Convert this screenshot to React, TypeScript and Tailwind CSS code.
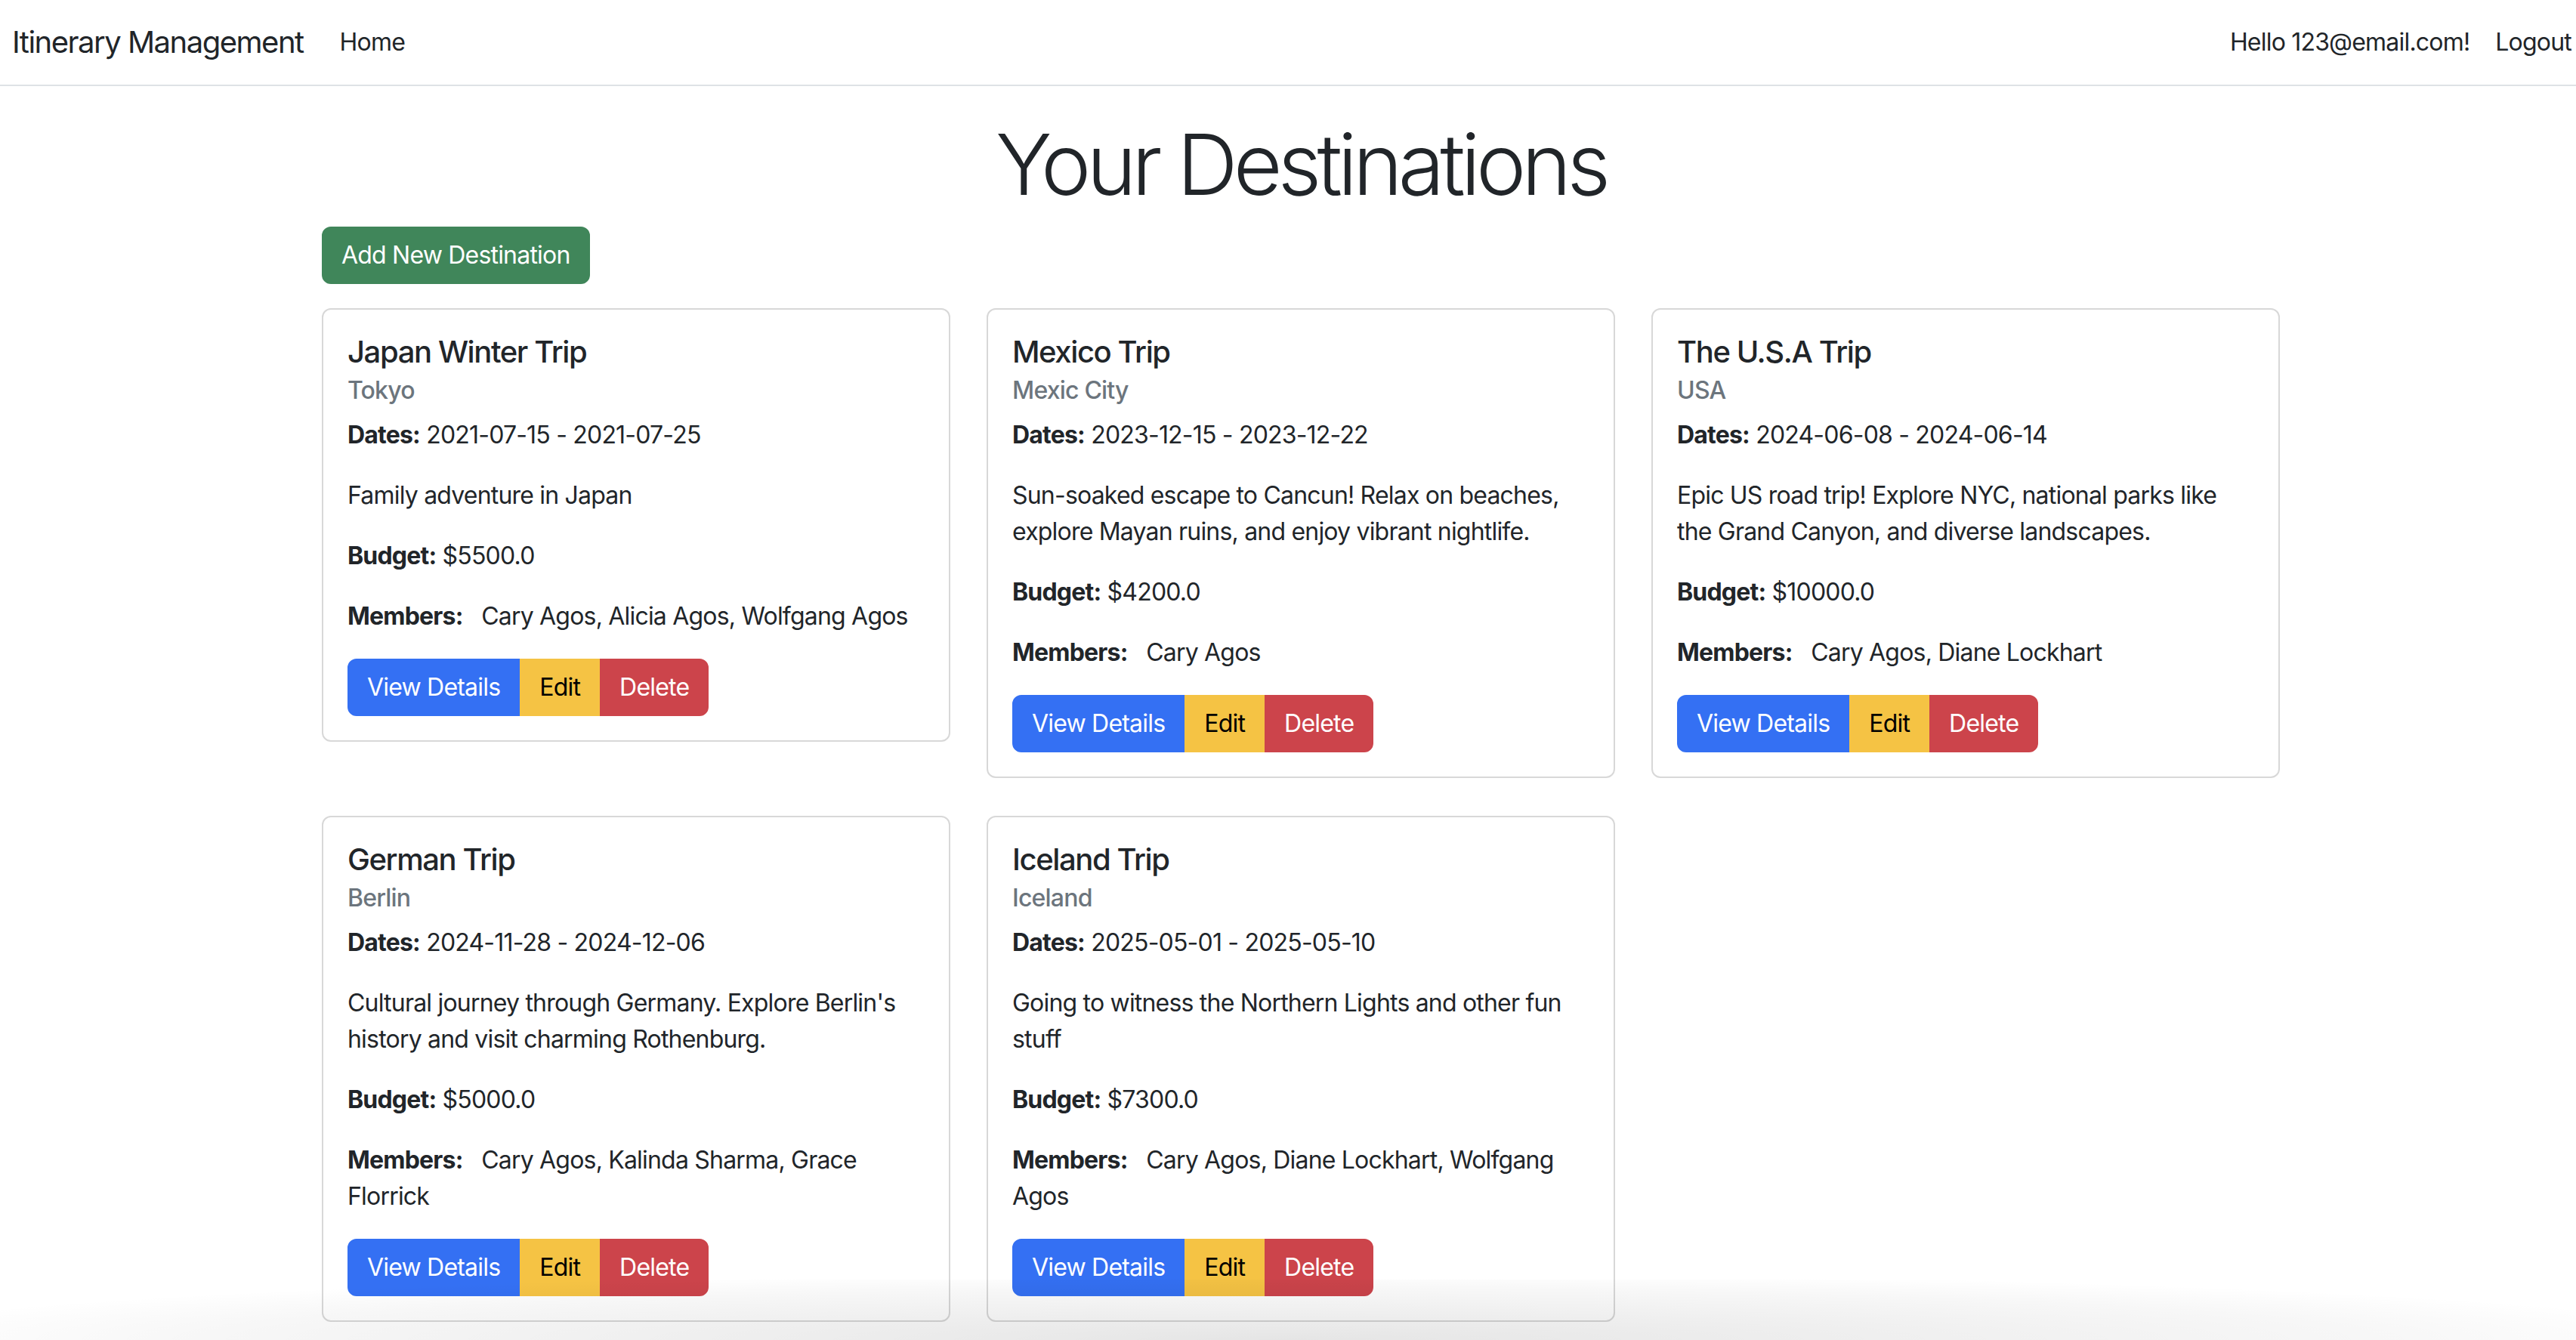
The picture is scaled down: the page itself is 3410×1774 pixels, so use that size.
import React from "react";

type Trip = {
  title: string;
  place: string;
  dates: string;
  desc: string;
  budget: string;
  members: string;
};

const trips: Trip[] = [
  {
    title: "Japan Winter Trip",
    place: "Tokyo",
    dates: "2021-07-15 - 2021-07-25",
    desc: "Family adventure in Japan",
    budget: "$5500.0",
    members: "Cary Agos, Alicia Agos, Wolfgang Agos",
  },
  {
    title: "Mexico Trip",
    place: "Mexic City",
    dates: "2023-12-15 - 2023-12-22",
    desc: "Sun-soaked escape to Cancun! Relax on beaches, explore Mayan ruins, and enjoy vibrant nightlife.",
    budget: "$4200.0",
    members: "Cary Agos",
  },
  {
    title: "The U.S.A Trip",
    place: "USA",
    dates: "2024-06-08 - 2024-06-14",
    desc: "Epic US road trip! Explore NYC, national parks like the Grand Canyon, and diverse landscapes.",
    budget: "$10000.0",
    members: "Cary Agos, Diane Lockhart",
  },
  {
    title: "German Trip",
    place: "Berlin",
    dates: "2024-11-28 - 2024-12-06",
    desc: "Cultural journey through Germany. Explore Berlin's history and visit charming Rothenburg.",
    budget: "$5000.0",
    members: "Cary Agos, Kalinda Sharma, Grace Florrick",
  },
  {
    title: "Iceland Trip",
    place: "Iceland",
    dates: "2025-05-01 - 2025-05-10",
    desc: "Going to witness the Northern Lights and other fun stuff",
    budget: "$7300.0",
    members: "Cary Agos, Diane Lockhart, Wolfgang Agos",
  },
];

function Card({ t }: { t: Trip }) {
  return (
    <div className="border-2 border-[#d8d8d8] rounded-xl p-8 bg-white">
      <h5 className="text-[40px] leading-[48px] font-medium tracking-[-1.4px] mb-4 text-[#212529]">{t.title}</h5>
      <h6 className="text-[32px] leading-[38px] font-medium -mt-2 mb-4 text-[#6c757d]">{t.place}</h6>
      <p className="mb-8">
        <strong className="font-bold">Dates:</strong> {t.dates}
      </p>
      <p className="mb-8">{t.desc}</p>
      <p className="mb-8">
        <strong className="font-bold">Budget:</strong> {t.budget}
      </p>
      <p className="mb-8">
        <strong className="font-bold">Members:</strong>
        {"\u00a0\u00a0 "}
        {t.members}
      </p>
      <div className="inline-flex">
        <button className="bg-[#3470f3] border-2 border-[#3470f3] text-white px-6 py-3 rounded-l-xl text-[32px] leading-[48px]">
          View Details
        </button>
        <button className="bg-[#f5c344] border-2 border-[#f5c344] text-black px-6 py-3 text-[32px] leading-[48px]">
          Edit
        </button>
        <button className="bg-[#cc444b] border-2 border-[#cc444b] text-white px-6 py-3 rounded-r-xl text-[32px] leading-[48px]">
          Delete
        </button>
      </div>
    </div>
  );
}

export default function App() {
  return (
    <div className="relative w-[3410px] h-[1774px] overflow-hidden bg-white text-[#212529] text-[32px] leading-[48px] tracking-[-0.8px] font-['Inter','Liberation_Sans',sans-serif]">
      <div className="w-[3444px]">
        <nav className="flex items-center justify-between pl-4 pr-[24px] py-4 border-b-2 border-[#dee2e6]">
          <div className="flex items-center">
            <span className="text-[40px] leading-[60px] tracking-[-1.5px] py-[10px] mr-8">Itinerary Management</span>
            <span className="px-4 py-4 text-[#212529]">Home</span>
          </div>
          <div className="flex items-center">
            <span className="pl-4 pr-[18px] py-4">Hello 123@email.com!</span>
            <span className="px-4 py-4">Logout</span>
          </div>
        </nav>
        <main className="mx-auto w-[2640px] px-6">
          <h1 className="text-center text-[112px] leading-[134px] font-light tracking-[-6px] mt-[36px] mb-4">Your Destinations</h1>
          <button className="bg-[#40865a] border-2 border-[#40865a] text-white px-6 py-3 rounded-xl text-[32px] leading-[48px] mb-8">
            Add New Destination
          </button>
          <div className="grid grid-cols-3 gap-x-12 gap-y-[50px] items-start">
            {trips.map((t) => (
              <Card key={t.title} t={t} />
            ))}
          </div>
        </main>
      </div>
      <div className="pointer-events-none absolute inset-x-0 bottom-0 h-[80px] bg-[radial-gradient(ellipse_at_bottom,rgba(0,0,0,0.1),rgba(0,0,0,0.03)_60%,transparent_80%)]" />
    </div>
  );
}
